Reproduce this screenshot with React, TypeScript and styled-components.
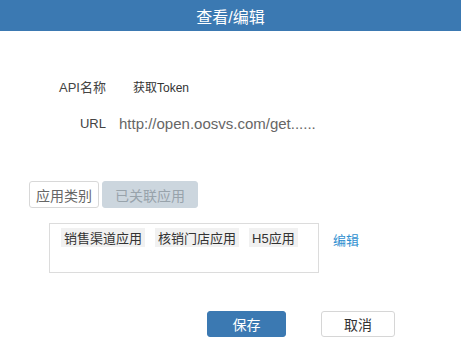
import React from 'react';
import styled, { createGlobalStyle } from 'styled-components';

const GlobalStyle = createGlobalStyle`
  html, body {
    margin: 0;
    padding: 0;
    background: #ffffff;
  }
  body {
    font-family: "Liberation Sans", "Noto Sans CJK SC", sans-serif;
    color: #333333;
  }
`;

const Dialog = styled.div`
  width: 461px;
  height: 347px;
  display: flex;
  flex-direction: column;
  background: #ffffff;
`;

const Header = styled.div`
  height: 31px;
  display: flex;
  align-items: center;
  justify-content: center;
  background-color: #3b79b2;
  color: #ffffff;
  font-size: 16px;
`;

const Body = styled.div`
  padding: 46px 0 0;
  display: flex;
  flex-direction: column;
`;

const FieldRow = styled.div`
  height: 18px;
  display: flex;
  align-items: center;
  margin-bottom: 19px;
`;

const FieldLabel = styled.span`
  width: 106px;
  text-align: right;
  font-size: 13px;
  color: #444444;
`;

const FieldValue = styled.span<{ indent: number; size: number }>`
  margin-left: ${({ indent }) => indent}px;
  font-size: ${({ size }) => size}px;
  color: ${({ size }) => (size > 13 ? '#666666' : '#333333')};
`;

const Tabs = styled.div`
  margin: 30px 0 0 29px;
  display: flex;
  gap: 3px;
`;

const Tab = styled.button<{ active?: boolean }>`
  height: 27px;
  padding: 0;
  border: 1px solid ${({ active }) => (active ? '#d8d8d8' : '#ccd6de')};
  border-radius: 3px;
  background-color: ${({ active }) => (active ? '#ffffff' : '#ccd6de')};
  color: ${({ active }) => (active ? '#666666' : '#98a3ab')};
  font-family: inherit;
  font-size: 14px;
  cursor: pointer;
  width: ${({ active }) => (active ? '70px' : '96px')};
`;

const AppRow = styled.div`
  margin: 15px 0 0 49px;
  display: flex;
  align-items: flex-start;
`;

const AppBox = styled.div`
  width: 270px;
  height: 50px;
  border: 1px solid #dcdcdc;
  padding: 4px 0 0 11px;
  box-sizing: border-box;
  display: flex;
  align-items: flex-start;
  gap: 10px;
`;

const AppTag = styled.span`
  height: 19px;
  padding: 0 3px;
  display: flex;
  align-items: center;
  background-color: #f1f1f1;
  font-size: 13px;
  color: #333333;
`;

const EditLink = styled.a`
  margin: 7px 0 0 14px;
  font-size: 13px;
  color: #2f8fd0;
  text-decoration: none;
  cursor: pointer;
`;

const Footer = styled.div`
  margin: 38px 0 0 207px;
  display: flex;
  gap: 35px;
`;

const Button = styled.button<{ primary?: boolean }>`
  height: 26px;
  width: ${({ primary }) => (primary ? '79px' : '74px')};
  border-radius: 3px;
  border: 1px solid ${({ primary }) => (primary ? '#3b79b2' : '#d6d6d6')};
  background-color: ${({ primary }) => (primary ? '#3b79b2' : '#ffffff')};
  color: ${({ primary }) => (primary ? '#ffffff' : '#333333')};
  font-family: inherit;
  font-size: 14px;
  cursor: pointer;
`;

const fields = [
  { label: 'API名称', value: '获取Token', indent: 27, size: 12 },
  { label: 'URL', value: 'http://open.oosvs.com/get......', indent: 13, size: 15 },
];

const apps = ['销售渠道应用', '核销门店应用', 'H5应用'];

const App = () => (
  <Dialog>
    <GlobalStyle />
    <Header>查看/编辑</Header>
    <Body>
      {fields.map(({ label, value, indent, size }) => (
        <FieldRow key={label}>
          <FieldLabel>{label}</FieldLabel>
          <FieldValue indent={indent} size={size}>{value}</FieldValue>
        </FieldRow>
      ))}
      <Tabs>
        <Tab active>应用类别</Tab>
        <Tab>已关联应用</Tab>
      </Tabs>
      <AppRow>
        <AppBox>
          {apps.map((name) => <AppTag key={name}>{name}</AppTag>)}
        </AppBox>
        <EditLink>编辑</EditLink>
      </AppRow>
      <Footer>
        <Button primary>保存</Button>
        <Button>取消</Button>
      </Footer>
    </Body>
  </Dialog>
);

export default App;
